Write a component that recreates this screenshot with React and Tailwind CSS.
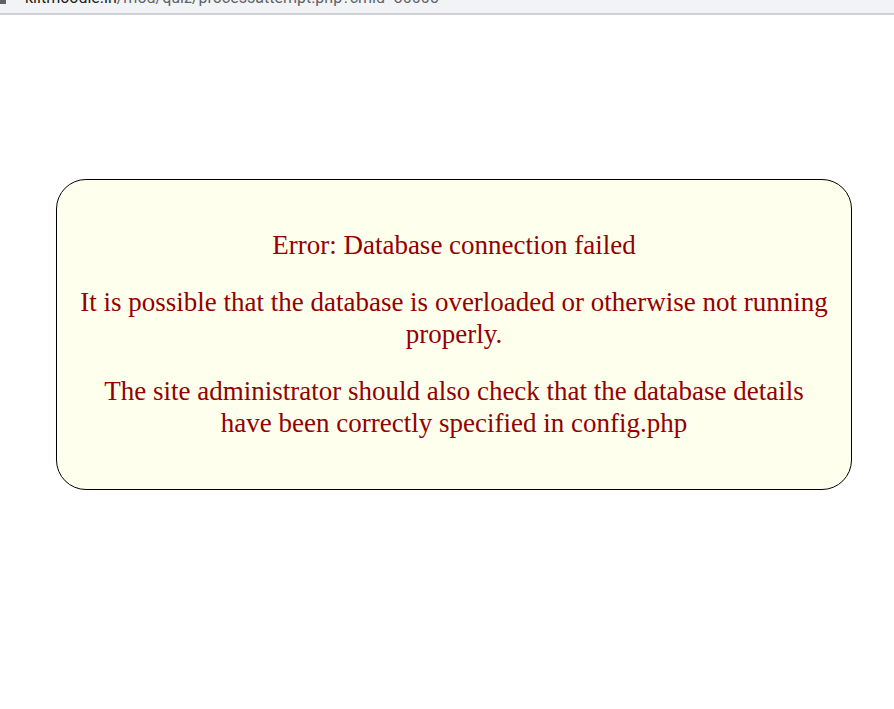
import React from 'react';

const App = () => {
  return (
    <div className="min-h-[709px] bg-white">
      {/* cut-off browser address bar */}
      <div className="h-[15px] overflow-hidden bg-[#f1f3f4] border-b-2 border-[#cfd2d6] relative">
        <div className="absolute left-0 top-[-12px] flex items-center whitespace-nowrap font-['Roboto',sans-serif] text-[16px] leading-[20px]">
          <span className="inline-block w-[6px] h-[12px] bg-[#5f6368] mr-[19px]" />
          <span className="text-[#202124]">kiitmoodle.in</span>
          <span className="text-[#5f6368]">/mod/quiz/processattempt.php?cmid=30005</span>
        </div>
      </div>

      <div className="pt-[164px] pl-[56px]">
        <div className="w-[796px] h-[311px] rounded-[30px] border border-black bg-[#ffffee] px-[21px] pt-[24px] pb-[26px] text-center font-['Liberation_Serif',serif] text-[27px] leading-[32px] text-[#940000]">
          <p className="my-[25px]">Error: Database connection failed</p>
          <p className="my-[25px]">
            It is possible that the database is overloaded or otherwise not running properly.
          </p>
          <p className="my-[25px]">
            The site administrator should also check that the database details have been correctly specified in config.php
          </p>
        </div>
      </div>
    </div>
  );
};

export default App;
